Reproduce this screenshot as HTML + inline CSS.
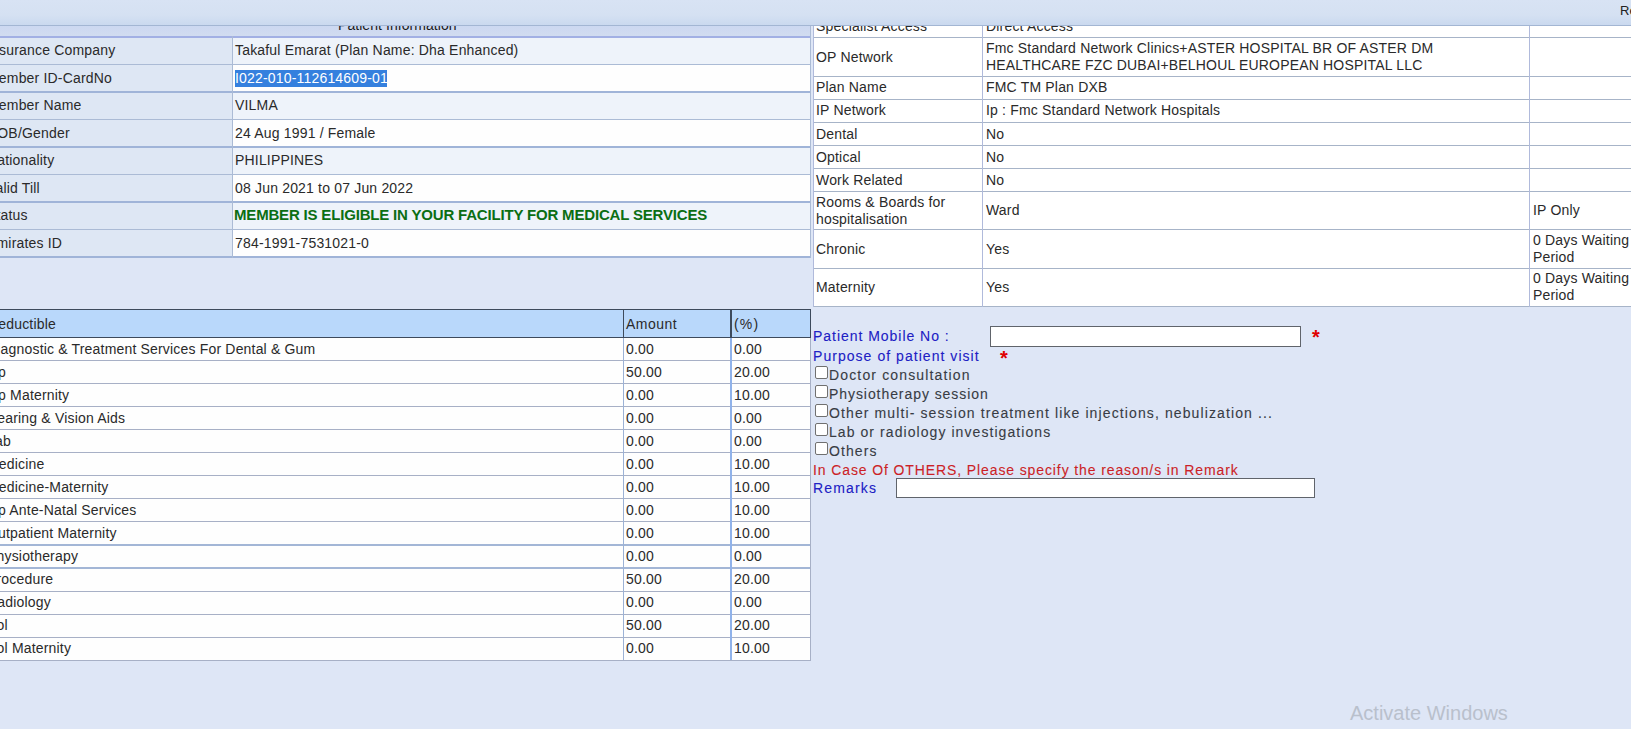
<!DOCTYPE html>
<html><head><meta charset="utf-8"><style>
html,body{margin:0;padding:0;}
body{width:1631px;height:729px;overflow:hidden;position:relative;background:#dee6f6;font-family:"Liberation Sans", sans-serif;}
.t{position:absolute;white-space:nowrap;letter-spacing:0.18px;}
.r{position:absolute;box-sizing:content-box;}
</style></head><body>
<div class="r" style="left:-16px;top:26px;width:827px;height:10px;background:linear-gradient(#ccd8f1,#d1dcf0);"></div>
<div class="t" style="left:338px;top:17px;font-size:14px;line-height:16px;color:#1a1a1a;letter-spacing:0.06px;">Patient Information</div>
<div class="r" style="left:-16px;top:38px;width:248px;height:26px;background:#dee7f4;"></div>
<div class="r" style="left:233px;top:38px;width:577px;height:26px;background:#eef3fa;"></div>
<div class="r" style="left:-16px;top:65px;width:248px;height:26px;background:#dee7f4;"></div>
<div class="r" style="left:233px;top:65px;width:577px;height:26px;background:#fefefe;"></div>
<div class="r" style="left:-16px;top:93px;width:248px;height:26px;background:#dee7f4;"></div>
<div class="r" style="left:233px;top:93px;width:577px;height:26px;background:#eef3fa;"></div>
<div class="r" style="left:-16px;top:120px;width:248px;height:26px;background:#dee7f4;"></div>
<div class="r" style="left:233px;top:120px;width:577px;height:26px;background:#fefefe;"></div>
<div class="r" style="left:-16px;top:148px;width:248px;height:26px;background:#dee7f4;"></div>
<div class="r" style="left:233px;top:148px;width:577px;height:26px;background:#eef3fa;"></div>
<div class="r" style="left:-16px;top:175px;width:248px;height:26px;background:#dee7f4;"></div>
<div class="r" style="left:233px;top:175px;width:577px;height:26px;background:#fefefe;"></div>
<div class="r" style="left:-16px;top:203px;width:248px;height:26px;background:#dee7f4;"></div>
<div class="r" style="left:233px;top:203px;width:577px;height:26px;background:#eef3fa;"></div>
<div class="r" style="left:-16px;top:230px;width:248px;height:26px;background:#dee7f4;"></div>
<div class="r" style="left:233px;top:230px;width:577px;height:26px;background:#fefefe;"></div>
<div class="r" style="left:-16px;top:91px;width:827px;height:2px;background:#a0b4d8;"></div>
<div class="r" style="left:-16px;top:146px;width:827px;height:2px;background:#a0b4d8;"></div>
<div class="r" style="left:-16px;top:201px;width:827px;height:2px;background:#a0b4d8;"></div>
<div class="r" style="left:-16px;top:256px;width:827px;height:2px;background:#a0b4d8;"></div>
<div class="r" style="left:-16px;top:36px;width:827px;height:2px;background:#a2b0e4;"></div>
<div class="r" style="left:-16px;top:64px;width:827px;height:1px;background:#abbbd5;"></div>
<div class="r" style="left:-16px;top:119px;width:827px;height:1px;background:#abbbd5;"></div>
<div class="r" style="left:-16px;top:174px;width:827px;height:1px;background:#abbbd5;"></div>
<div class="r" style="left:-16px;top:229px;width:827px;height:1px;background:#abbbd5;"></div>
<div class="r" style="left:232px;top:36px;width:1px;height:222px;background:#abbbd5;"></div>
<div class="r" style="left:810px;top:26px;width:1px;height:232px;background:#abbbd5;"></div>
<div class="t" style="left:-13px;top:42px;font-size:14px;line-height:16px;color:#2a2a2a;">Insurance Company</div>
<div class="t" style="left:235px;top:42px;font-size:14px;line-height:16px;color:#2a2a2a;">Takaful Emarat (Plan Name: Dha Enhanced)</div>
<div class="t" style="left:-13px;top:70px;font-size:14px;line-height:16px;color:#2a2a2a;">Member ID-CardNo</div>
<div class="r" style="left:235px;top:70px;width:152px;height:17px;background:#3580de;"></div>
<div class="t" style="left:235px;top:70px;font-size:14px;line-height:16px;color:#ffffff;">I022-010-112614609-01</div>
<div class="t" style="left:-13px;top:97px;font-size:14px;line-height:16px;color:#2a2a2a;">Member Name</div>
<div class="t" style="left:235px;top:97px;font-size:14px;line-height:16px;color:#2a2a2a;">VILMA</div>
<div class="t" style="left:-13px;top:125px;font-size:14px;line-height:16px;color:#2a2a2a;">DOB/Gender</div>
<div class="t" style="left:235px;top:125px;font-size:14px;line-height:16px;color:#2a2a2a;">24 Aug 1991 / Female</div>
<div class="t" style="left:-13px;top:152px;font-size:14px;line-height:16px;color:#2a2a2a;">Nationality</div>
<div class="t" style="left:235px;top:152px;font-size:14px;line-height:16px;color:#2a2a2a;">PHILIPPINES</div>
<div class="t" style="left:-13px;top:180px;font-size:14px;line-height:16px;color:#2a2a2a;">Valid Till</div>
<div class="t" style="left:235px;top:180px;font-size:14px;line-height:16px;color:#2a2a2a;">08 Jun 2021 to 07 Jun 2022</div>
<div class="t" style="left:-13px;top:207px;font-size:14px;line-height:16px;color:#2a2a2a;">Status</div>
<div class="t" style="left:234px;top:207px;font-size:14px;line-height:16px;color:#0b6e13;font-weight:bold;font-size:15px;letter-spacing:-0.18px;">MEMBER IS ELIGIBLE IN YOUR FACILITY FOR MEDICAL SERVICES</div>
<div class="t" style="left:-13px;top:235px;font-size:14px;line-height:16px;color:#2a2a2a;">Emirates ID</div>
<div class="t" style="left:235px;top:235px;font-size:14px;line-height:16px;color:#2a2a2a;">784-1991-7531021-0</div>
<div class="r" style="left:813px;top:26px;width:818px;height:280px;background:#ffffff;"></div>
<div class="r" style="left:813px;top:37px;width:818px;height:1px;background:#a7b4c8;"></div>
<div class="r" style="left:813px;top:76px;width:818px;height:1px;background:#a7b4c8;"></div>
<div class="r" style="left:813px;top:99px;width:818px;height:1px;background:#a7b4c8;"></div>
<div class="r" style="left:813px;top:122px;width:818px;height:1px;background:#a7b4c8;"></div>
<div class="r" style="left:813px;top:145px;width:818px;height:1px;background:#a7b4c8;"></div>
<div class="r" style="left:813px;top:168px;width:818px;height:1px;background:#a7b4c8;"></div>
<div class="r" style="left:813px;top:191px;width:818px;height:1px;background:#a7b4c8;"></div>
<div class="r" style="left:813px;top:229px;width:818px;height:1px;background:#a7b4c8;"></div>
<div class="r" style="left:813px;top:268px;width:818px;height:1px;background:#a7b4c8;"></div>
<div class="r" style="left:813px;top:306px;width:818px;height:1px;background:#a7b4c8;"></div>
<div class="r" style="left:813px;top:26px;width:1px;height:281px;background:#b0badb;"></div>
<div class="r" style="left:982px;top:26px;width:1px;height:281px;background:#b0badb;"></div>
<div class="r" style="left:1529px;top:26px;width:1px;height:281px;background:#b0badb;"></div>
<div class="t" style="left:816px;top:18px;font-size:14px;line-height:16px;color:#2a2a2a;">Specialist Access</div>
<div class="t" style="left:986px;top:18px;font-size:14px;line-height:16px;color:#2a2a2a;">Direct Access</div>
<div class="t" style="left:816px;top:49px;font-size:14px;line-height:16px;color:#2a2a2a;">OP Network</div>
<div class="t" style="left:986px;top:40px;font-size:14px;line-height:16px;color:#2a2a2a;">Fmc Standard Network Clinics+ASTER HOSPITAL BR OF ASTER DM</div>
<div class="t" style="left:986px;top:57px;font-size:14px;line-height:16px;color:#2a2a2a;">HEALTHCARE FZC DUBAI+BELHOUL EUROPEAN HOSPITAL LLC</div>
<div class="t" style="left:816px;top:79px;font-size:14px;line-height:16px;color:#2a2a2a;">Plan Name</div>
<div class="t" style="left:986px;top:79px;font-size:14px;line-height:16px;color:#2a2a2a;">FMC TM Plan DXB</div>
<div class="t" style="left:816px;top:102px;font-size:14px;line-height:16px;color:#2a2a2a;">IP Network</div>
<div class="t" style="left:986px;top:102px;font-size:14px;line-height:16px;color:#2a2a2a;">Ip : Fmc Standard Network Hospitals</div>
<div class="t" style="left:816px;top:126px;font-size:14px;line-height:16px;color:#2a2a2a;">Dental</div>
<div class="t" style="left:986px;top:126px;font-size:14px;line-height:16px;color:#2a2a2a;">No</div>
<div class="t" style="left:816px;top:149px;font-size:14px;line-height:16px;color:#2a2a2a;">Optical</div>
<div class="t" style="left:986px;top:149px;font-size:14px;line-height:16px;color:#2a2a2a;">No</div>
<div class="t" style="left:816px;top:172px;font-size:14px;line-height:16px;color:#2a2a2a;">Work Related</div>
<div class="t" style="left:986px;top:172px;font-size:14px;line-height:16px;color:#2a2a2a;">No</div>
<div class="t" style="left:816px;top:194px;font-size:14px;line-height:16px;color:#2a2a2a;">Rooms &amp; Boards for</div>
<div class="t" style="left:816px;top:211px;font-size:14px;line-height:16px;color:#2a2a2a;">hospitalisation</div>
<div class="t" style="left:986px;top:202px;font-size:14px;line-height:16px;color:#2a2a2a;">Ward</div>
<div class="t" style="left:1533px;top:202px;font-size:14px;line-height:16px;color:#2a2a2a;">IP Only</div>
<div class="t" style="left:816px;top:241px;font-size:14px;line-height:16px;color:#2a2a2a;">Chronic</div>
<div class="t" style="left:986px;top:241px;font-size:14px;line-height:16px;color:#2a2a2a;">Yes</div>
<div class="t" style="left:1533px;top:232px;font-size:14px;line-height:16px;color:#2a2a2a;">0 Days Waiting</div>
<div class="t" style="left:1533px;top:249px;font-size:14px;line-height:16px;color:#2a2a2a;">Period</div>
<div class="t" style="left:816px;top:279px;font-size:14px;line-height:16px;color:#2a2a2a;">Maternity</div>
<div class="t" style="left:986px;top:279px;font-size:14px;line-height:16px;color:#2a2a2a;">Yes</div>
<div class="t" style="left:1533px;top:270px;font-size:14px;line-height:16px;color:#2a2a2a;">0 Days Waiting</div>
<div class="t" style="left:1533px;top:287px;font-size:14px;line-height:16px;color:#2a2a2a;">Period</div>
<div class="r" style="left:0;top:0;width:1631px;height:25px;background:linear-gradient(#d8e3f4 0%,#d5e1f2 60%,#cad9ef 100%);"></div>
<div class="r" style="left:0px;top:25px;width:1631px;height:1px;background:#a3b6d3;"></div>
<div class="t" style="left:1620px;top:3px;font-size:13px;line-height:15px;color:#222;">Re</div>
<div class="r" style="left:-16px;top:310px;width:827px;height:27px;background:#b9d8fb;"></div>
<div class="r" style="left:-16px;top:309px;width:827px;height:1px;background:#3d4a5c;"></div>
<div class="r" style="left:-16px;top:337px;width:827px;height:1px;background:#3d4a5c;"></div>
<div class="r" style="left:623px;top:309px;width:1px;height:29px;background:#3d4a5c;"></div>
<div class="r" style="left:730px;top:309px;width:2px;height:29px;background:#3d4a5c;"></div>
<div class="r" style="left:810px;top:309px;width:1px;height:29px;background:#3d4a5c;"></div>
<div class="t" style="left:-12px;top:316px;font-size:14px;line-height:16px;color:#2a2a2a;">Deductible</div>
<div class="t" style="left:626px;top:316px;font-size:14px;line-height:16px;color:#2a2a2a;letter-spacing:0.5px;line-height:16px;">Amount</div>
<div class="t" style="left:734px;top:316px;font-size:14px;line-height:16px;color:#2a2a2a;letter-spacing:1.2px;line-height:16px;">(%)</div>
<div class="r" style="left:-16px;top:338px;width:827px;height:322px;background:#fefefe;"></div>
<div class="r" style="left:-16px;top:360px;width:827px;height:1px;background:#a7b0c6;"></div>
<div class="r" style="left:-16px;top:383px;width:827px;height:1px;background:#a7b0c6;"></div>
<div class="r" style="left:-16px;top:406px;width:827px;height:1px;background:#a7b0c6;"></div>
<div class="r" style="left:-16px;top:429px;width:827px;height:1px;background:#a7b0c6;"></div>
<div class="r" style="left:-16px;top:452px;width:827px;height:1px;background:#a7b0c6;"></div>
<div class="r" style="left:-16px;top:475px;width:827px;height:1px;background:#a7b0c6;"></div>
<div class="r" style="left:-16px;top:498px;width:827px;height:1px;background:#a7b0c6;"></div>
<div class="r" style="left:-16px;top:521px;width:827px;height:1px;background:#a7b0c6;"></div>
<div class="r" style="left:-16px;top:591px;width:827px;height:1px;background:#a7b0c6;"></div>
<div class="r" style="left:-16px;top:614px;width:827px;height:1px;background:#a7b0c6;"></div>
<div class="r" style="left:-16px;top:637px;width:827px;height:1px;background:#a7b0c6;"></div>
<div class="r" style="left:-16px;top:660px;width:827px;height:1px;background:#a7b0c6;"></div>
<div class="r" style="left:-16px;top:544px;width:827px;height:2px;background:#a3b6d6;"></div>
<div class="r" style="left:-16px;top:567px;width:827px;height:2px;background:#a3b6d6;"></div>
<div class="t" style="left:-13px;top:341px;font-size:14px;line-height:16px;color:#2a2a2a;">Diagnostic &amp; Treatment Services For Dental &amp; Gum</div>
<div class="t" style="left:626px;top:341px;font-size:14px;line-height:16px;color:#2a2a2a;">0.00</div>
<div class="t" style="left:734px;top:341px;font-size:14px;line-height:16px;color:#2a2a2a;">0.00</div>
<div class="t" style="left:-13px;top:364px;font-size:14px;line-height:16px;color:#2a2a2a;">Op</div>
<div class="t" style="left:626px;top:364px;font-size:14px;line-height:16px;color:#2a2a2a;">50.00</div>
<div class="t" style="left:734px;top:364px;font-size:14px;line-height:16px;color:#2a2a2a;">20.00</div>
<div class="t" style="left:-13px;top:387px;font-size:14px;line-height:16px;color:#2a2a2a;">Op Maternity</div>
<div class="t" style="left:626px;top:387px;font-size:14px;line-height:16px;color:#2a2a2a;">0.00</div>
<div class="t" style="left:734px;top:387px;font-size:14px;line-height:16px;color:#2a2a2a;">10.00</div>
<div class="t" style="left:-13px;top:410px;font-size:14px;line-height:16px;color:#2a2a2a;">Hearing &amp; Vision Aids</div>
<div class="t" style="left:626px;top:410px;font-size:14px;line-height:16px;color:#2a2a2a;">0.00</div>
<div class="t" style="left:734px;top:410px;font-size:14px;line-height:16px;color:#2a2a2a;">0.00</div>
<div class="t" style="left:-13px;top:433px;font-size:14px;line-height:16px;color:#2a2a2a;">Lab</div>
<div class="t" style="left:626px;top:433px;font-size:14px;line-height:16px;color:#2a2a2a;">0.00</div>
<div class="t" style="left:734px;top:433px;font-size:14px;line-height:16px;color:#2a2a2a;">0.00</div>
<div class="t" style="left:-13px;top:456px;font-size:14px;line-height:16px;color:#2a2a2a;">Medicine</div>
<div class="t" style="left:626px;top:456px;font-size:14px;line-height:16px;color:#2a2a2a;">0.00</div>
<div class="t" style="left:734px;top:456px;font-size:14px;line-height:16px;color:#2a2a2a;">10.00</div>
<div class="t" style="left:-13px;top:479px;font-size:14px;line-height:16px;color:#2a2a2a;">Medicine-Maternity</div>
<div class="t" style="left:626px;top:479px;font-size:14px;line-height:16px;color:#2a2a2a;">0.00</div>
<div class="t" style="left:734px;top:479px;font-size:14px;line-height:16px;color:#2a2a2a;">10.00</div>
<div class="t" style="left:-13px;top:502px;font-size:14px;line-height:16px;color:#2a2a2a;">Op Ante-Natal Services</div>
<div class="t" style="left:626px;top:502px;font-size:14px;line-height:16px;color:#2a2a2a;">0.00</div>
<div class="t" style="left:734px;top:502px;font-size:14px;line-height:16px;color:#2a2a2a;">10.00</div>
<div class="t" style="left:-13px;top:525px;font-size:14px;line-height:16px;color:#2a2a2a;">Outpatient Maternity</div>
<div class="t" style="left:626px;top:525px;font-size:14px;line-height:16px;color:#2a2a2a;">0.00</div>
<div class="t" style="left:734px;top:525px;font-size:14px;line-height:16px;color:#2a2a2a;">10.00</div>
<div class="t" style="left:-13px;top:548px;font-size:14px;line-height:16px;color:#2a2a2a;">Physiotherapy</div>
<div class="t" style="left:626px;top:548px;font-size:14px;line-height:16px;color:#2a2a2a;">0.00</div>
<div class="t" style="left:734px;top:548px;font-size:14px;line-height:16px;color:#2a2a2a;">0.00</div>
<div class="t" style="left:-13px;top:571px;font-size:14px;line-height:16px;color:#2a2a2a;">Procedure</div>
<div class="t" style="left:626px;top:571px;font-size:14px;line-height:16px;color:#2a2a2a;">50.00</div>
<div class="t" style="left:734px;top:571px;font-size:14px;line-height:16px;color:#2a2a2a;">20.00</div>
<div class="t" style="left:-13px;top:594px;font-size:14px;line-height:16px;color:#2a2a2a;">Radiology</div>
<div class="t" style="left:626px;top:594px;font-size:14px;line-height:16px;color:#2a2a2a;">0.00</div>
<div class="t" style="left:734px;top:594px;font-size:14px;line-height:16px;color:#2a2a2a;">0.00</div>
<div class="t" style="left:-14.5px;top:617px;font-size:14px;line-height:16px;color:#2a2a2a;">Ool</div>
<div class="t" style="left:626px;top:617px;font-size:14px;line-height:16px;color:#2a2a2a;">50.00</div>
<div class="t" style="left:734px;top:617px;font-size:14px;line-height:16px;color:#2a2a2a;">20.00</div>
<div class="t" style="left:-14.5px;top:640px;font-size:14px;line-height:16px;color:#2a2a2a;">Ool Maternity</div>
<div class="t" style="left:626px;top:640px;font-size:14px;line-height:16px;color:#2a2a2a;">0.00</div>
<div class="t" style="left:734px;top:640px;font-size:14px;line-height:16px;color:#2a2a2a;">10.00</div>
<div class="r" style="left:623px;top:338px;width:1px;height:322px;background:#9cb2d6;"></div>
<div class="r" style="left:730px;top:338px;width:2px;height:322px;background:#90b2ea;"></div>
<div class="r" style="left:810px;top:338px;width:1px;height:323px;background:#a7b0c6;"></div>
<div class="t" style="left:813px;top:329px;font-size:14px;line-height:15px;color:#2020c4;letter-spacing:0.967px;-webkit-text-stroke:0.1px #2020c4;">Patient Mobile No :</div>
<div class="r" style="left:990px;top:326px;width:309px;height:19px;background:#fff;border:1px solid #60646b;"></div>
<div class="t" style="left:1312px;top:327px;font-size:20px;line-height:20px;font-weight:bold;color:#e00000;letter-spacing:0">*</div>
<div class="t" style="left:813px;top:349px;font-size:14px;line-height:15px;color:#2020c4;letter-spacing:1.043px;-webkit-text-stroke:0.1px #2020c4;">Purpose of patient visit</div>
<div class="t" style="left:1000px;top:348px;font-size:20px;line-height:20px;font-weight:bold;color:#e00000;letter-spacing:0">*</div>
<div class="r" style="left:815px;top:366px;width:11px;height:11px;background:#fff;border:1px solid #707070;border-radius:2px;"></div>
<div class="t" style="left:829px;top:368px;font-size:14px;line-height:15px;color:#383c44;letter-spacing:1.15px;-webkit-text-stroke:0.1px #383c44;">Doctor consultation</div>
<div class="r" style="left:815px;top:385px;width:11px;height:11px;background:#fff;border:1px solid #707070;border-radius:2px;"></div>
<div class="t" style="left:829px;top:387px;font-size:14px;line-height:15px;color:#383c44;letter-spacing:0.93px;-webkit-text-stroke:0.1px #383c44;">Physiotherapy session</div>
<div class="r" style="left:815px;top:404px;width:11px;height:11px;background:#fff;border:1px solid #707070;border-radius:2px;"></div>
<div class="t" style="left:829px;top:406px;font-size:14px;line-height:15px;color:#383c44;letter-spacing:1.114px;-webkit-text-stroke:0.1px #383c44;">Other multi- session treatment like injections, nebulization ...</div>
<div class="r" style="left:815px;top:423px;width:11px;height:11px;background:#fff;border:1px solid #707070;border-radius:2px;"></div>
<div class="t" style="left:829px;top:425px;font-size:14px;line-height:15px;color:#383c44;letter-spacing:1.067px;-webkit-text-stroke:0.1px #383c44;">Lab or radiology investigations</div>
<div class="r" style="left:815px;top:442px;width:11px;height:11px;background:#fff;border:1px solid #707070;border-radius:2px;"></div>
<div class="t" style="left:829px;top:444px;font-size:14px;line-height:15px;color:#383c44;letter-spacing:1.08px;-webkit-text-stroke:0.1px #383c44;">Others</div>
<div class="t" style="left:813px;top:463px;font-size:14px;line-height:15px;color:#cc1f26;letter-spacing:0.889px;-webkit-text-stroke:0.1px #cc1f26;">In Case Of OTHERS, Please specify the reason/s in Remark</div>
<div class="t" style="left:813px;top:481px;font-size:14px;line-height:15px;color:#2020c4;letter-spacing:1.167px;-webkit-text-stroke:0.1px #2020c4;">Remarks</div>
<div class="r" style="left:896px;top:478px;width:417px;height:18px;background:#fff;border:1px solid #60646b;"></div>
<div class="t" style="left:1350px;top:702px;font-size:20px;line-height:22px;color:#b9c0cc;letter-spacing:0px;">Activate Windows</div>
</body></html>
